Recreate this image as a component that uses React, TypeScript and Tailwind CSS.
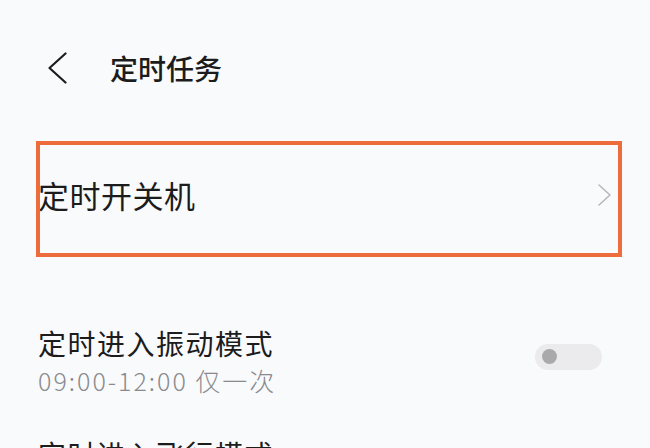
// 定时任务 settings screen, with the orange annotation box drawn over the first row.
function BackIcon() {
  return (
    <svg width="20" height="32" viewBox="0 0 20 32" fill="none" stroke="#1c1c1c" strokeWidth="2.2" strokeLinecap="round" strokeLinejoin="round">
      <path d="M17.5 1.5 L1.5 16 L17.5 30.5" />
    </svg>
  )
}

function ChevronRight() {
  return (
    <svg width="13" height="22" viewBox="0 0 13 22" fill="none" stroke="#b4b4b8" strokeWidth="1.4" strokeLinecap="round" strokeLinejoin="round">
      <path d="M1 1 L12 11 L1 21" />
    </svg>
  )
}

function Toggle() {
  return (
    <div className="mb-[7px] flex h-[26px] w-[67px] items-center rounded-full bg-[#ebebee] pl-[7px]">
      <div className="h-[15px] w-[15px] rounded-full bg-[#a9a9ac]" />
    </div>
  )
}

export default function App() {
  return (
    <div
      className="h-[448px] w-[650px] overflow-hidden bg-[#f9fafc] text-[#1c1c1c]"
      style={{ fontFamily: '"Noto Sans CJK SC", "Noto Sans", sans-serif' }}
    >
      <header className="flex h-[136px] items-center pl-[48px]">
        <BackIcon />
        <h1 className="ml-[42px] text-[28px] leading-[36px] font-medium">定时任务</h1>
      </header>

      <div className="relative">
        <div className="flex h-[118px] items-center justify-between pl-[38px] pr-[39px]">
          <span className="text-[31px] leading-[40px] tracking-[0.5px]">定时开关机</span>
          <ChevronRight />
        </div>
        {/* annotation overlay */}
        <div className="pointer-events-none absolute left-[36px] top-[5px] h-[116px] w-[586px] border-4 border-[#ee6b3c]" />
      </div>

      <div className="flex items-center justify-between pl-[38px] pr-[48px] pt-[71px]">
        <div className="flex flex-col">
          <span className="text-[28px] leading-[36px] tracking-[1.5px]">定时进入振动模式</span>
          <span className="mt-[4px] text-[25px] leading-[30px] font-light tracking-[2px] text-[#8a8a8e]">09:00-12:00 仅一次</span>
        </div>
        <Toggle />
      </div>

      <div className="pl-[38px] pt-[41px]">
        <span className="text-[28px] leading-[36px] tracking-[1.5px]">定时进入飞行模式</span>
      </div>
    </div>
  )
}
